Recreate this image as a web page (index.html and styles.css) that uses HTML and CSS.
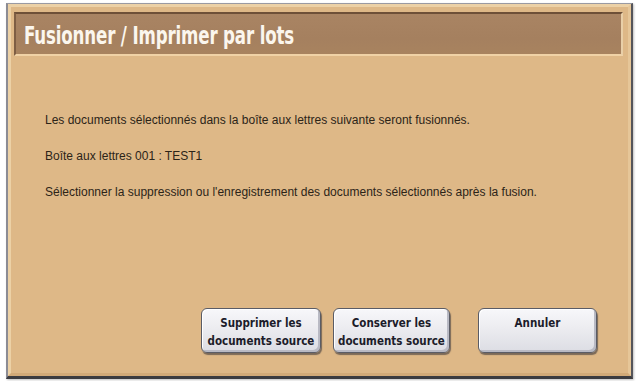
FILE: index.html
```html
<!DOCTYPE html>
<html lang="fr">
<head>
<meta charset="utf-8">
<link rel="stylesheet" href="styles.css">
</head>
<body>
<div class="frame">
  <div class="inner">
    <div class="title"><span class="title-text">Fusionner / Imprimer par lots</span></div>
    <div class="content">
      <p class="line l1">Les documents sélectionnés dans la boîte aux lettres suivante seront fusionnés.</p>
      <p class="line l2">Boîte aux lettres 001 : TEST1</p>
      <p class="line l3">Sélectionner la suppression ou l'enregistrement des documents sélectionnés après la fusion.</p>
    </div>
    <div class="buttons">
      <div class="btn b1">Supprimer les<br>documents source</div>
      <div class="btn b2">Conserver les<br>documents source</div>
      <div class="btn b3">Annuler</div>
    </div>
  </div>
</div>
</body>
</html>
```
FILE: styles.css
```css
html, body {
  margin: 0;
  padding: 0;
  background: #ffffff;
}
body {
  width: 637px;
  height: 381px;
  overflow: hidden;
}
.frame {
  box-sizing: border-box;
  margin: 3px 0 0 6px;
  width: 627px;
  height: 376px;
  border-top: 1px solid #9a9aa2;
  border-left: 2px solid #8c8c94;
  border-right: 2px solid #55555a;
  border-bottom: 3px solid #3c3c40;
  background: #deb887;
  box-shadow: 1px 1px 2px rgba(0,0,0,0.25);
}
.inner {
  box-sizing: border-box;
  height: 100%;
  border: 3px solid #ecd1a6;
  border-bottom-color: #d2aa78;
  border-right-color: #e6c698;
  padding: 5px 5px 0 3px;
  display: flex;
  flex-direction: column;
}
.title {
  height: 44px;
  box-sizing: border-box;
  background: linear-gradient(#a98463, #a5805f 60%, #a8835f);
  border-top: 2px solid #6e5038;
  border-left: 2px solid #7e5e44;
  border-bottom: 2px solid #f0d2a6;
  border-right: 2px solid #e9cfa8;
  display: flex;
  align-items: center;
  padding-left: 8px;
  overflow: hidden;
}
.title-text {
  font-family: "DejaVu Sans Condensed", "DejaVu Sans", sans-serif;
  font-weight: bold;
  font-size: 25px;
  color: #fbf6ee;
  letter-spacing: -0.2px;
  display: inline-block;
  white-space: nowrap;
  transform: scaleX(0.74);
  transform-origin: left center;
  position: relative;
  top: 1px;
}
.content {
  padding-left: 31px;
  padding-top: 57px;
  font-family: "Liberation Sans", Arial, sans-serif;
  font-size: 12px;
  color: #2c2418;
}
.line {
  margin: 0;
  line-height: 14px;
}
.l2, .l3 {
  margin-top: 22px;
}
.buttons {
  margin-top: auto;
  display: flex;
  padding-left: 187px;
  padding-bottom: 20px;
}
.btn {
  box-sizing: border-box;
  height: 45px;
  border-radius: 6px;
  border: 1px solid #5a5c66;
  background: linear-gradient(#f7f7fa, #ececf0 45%, #dcdde4);
  box-shadow: inset 1px 1px 0 #ffffff, inset -2px -2px 0 #b9bac4, 1px 2px 1px rgba(40,40,50,0.55);
  font-family: "DejaVu Sans Condensed", "DejaVu Sans", sans-serif;
  font-weight: bold;
  font-size: 11.5px;
  line-height: 18px;
  color: #1c1c2a;
  text-align: center;
  padding-top: 5px;
  white-space: nowrap;
}
.b1 { width: 120px; }
.b2 { width: 117px; margin-left: 12px; }
.b3 { width: 119px; margin-left: 28px; }
```
